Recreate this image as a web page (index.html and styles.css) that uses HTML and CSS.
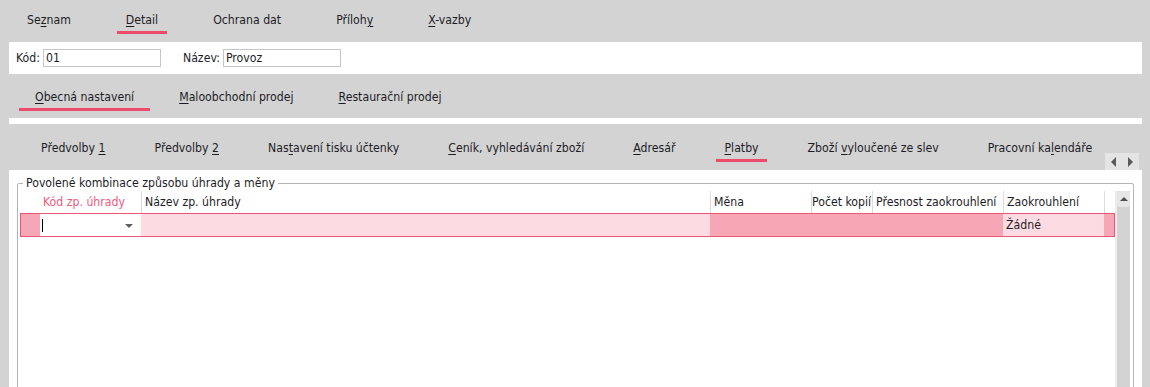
FILE: index.html
```html
<!DOCTYPE html>
<html lang="cs">
<head>
  <meta charset="UTF-8">
  <title>Provoz - Platby</title>
  <link rel="stylesheet" href="styles.css">
</head>
<body>
  <!-- Main tabs -->
  <div class="tabs tabs-main">
    <div class="tab">Se<u>z</u>nam</div>
    <div class="tab active"><u>D</u>etail</div>
    <div class="tab">Ochrana dat</div>
    <div class="tab">Příloh<u>y</u></div>
    <div class="tab"><u>X</u>-vazby</div>
  </div>

  <!-- Record header -->
  <div class="record">
    <label for="kod">Kód:</label>
    <input type="text" id="kod" value="01">
    <label for="nazev" class="second">Název:</label>
    <input type="text" id="nazev" value="Provoz">
  </div>

  <!-- Section tabs -->
  <div class="tabs tabs-sub">
    <div class="tab active"><u>O</u>becná nastavení</div>
    <div class="tab"><u>M</u>aloobchodní prodej</div>
    <div class="tab"><u>R</u>estaurační prodej</div>
  </div>
  <div class="divider"></div>

  <!-- Page tabs -->
  <div class="tabs tabs-page">
    <div class="tab">Předvolby <u>1</u></div>
    <div class="tab">Předvolby <u>2</u></div>
    <div class="tab">Nas<u>t</u>avení tisku účtenky</div>
    <div class="tab"><u>C</u>eník, vyhledávání zboží</div>
    <div class="tab"><u>A</u>dresář</div>
    <div class="tab active"><u>P</u>latby</div>
    <div class="tab">Zboží <u>v</u>yloučené ze slev</div>
    <div class="tab">Pracovní ka<u>l</u>endáře</div>
    <div class="scroll-arrows">
      <span class="arrow arrow-left"></span>
      <span class="arrow arrow-right"></span>
    </div>
  </div>

  <!-- Content -->
  <div class="panel">
    <fieldset class="group">
      <legend>Povolené kombinace způsobu úhrady a měny</legend>
      <div class="grid-wrap">
        <div class="grid">
          <div class="grid-head">
            <div class="cell"></div>
            <div class="cell key">Kód zp. úhrady</div>
            <div class="cell sep">Název zp. úhrady</div>
            <div class="cell sep">Měna</div>
            <div class="cell sep right">Počet kopií</div>
            <div class="cell sep">Přesnost zaokrouhlení</div>
            <div class="cell sep">Zaokrouhlení</div>
            <div class="cell sep"></div>
          </div>
          <div class="grid-row">
            <div class="cell mark"></div>
            <div class="cell editor"><span class="caret"></span><span class="drop"></span></div>
            <div class="cell light"></div>
            <div class="cell dark"></div>
            <div class="cell dark"></div>
            <div class="cell dark"></div>
            <div class="cell light">Žádné</div>
            <div class="cell dark"></div>
          </div>
        </div>
        <div class="vscroll">
          <div class="vscroll-up"></div>
        </div>
      </div>
    </fieldset>
  </div>
</body>
</html>
```

FILE: styles.css
```css
/* Base */
* {
  box-sizing: border-box;
}

body {
  margin: 0;
  height: 387px;
  overflow: hidden;
  background: #d3d3d3;
  color: #1c1c26;
  font-family: "DejaVu Sans Condensed", Tahoma, sans-serif;
  font-size: 12.2px;
}

u {
  text-decoration-thickness: 1px;
  text-underline-offset: 2px;
}

/* Tabs */
.tabs {
  display: flex;
  align-items: flex-start;
  white-space: nowrap;
}

.tab {
  line-height: 16px;
  border-bottom: 3px solid transparent;
}

.tab.active {
  border-bottom-color: #ee4a6c;
}

.tabs-main {
  height: 42px;
  padding-left: 18px;
  gap: 37px;
}

.tabs-main .tab {
  padding: 12px 9px 3px;
}

.tabs-sub {
  height: 44px;
  padding-left: 19px;
  gap: 13px;
}

.tabs-sub .tab {
  padding: 15px 16px 3px;
}

.tabs-page {
  position: relative;
  height: 46px;
  margin: 0 8px 0 9px;
  padding-left: 24px;
  gap: 33px;
  overflow: hidden;
}

.tabs-page .tab {
  padding: 16px 8px 3px;
}

/* Record header */
.record {
  display: flex;
  align-items: center;
  height: 32px;
  margin: 0 8px 0 9px;
  padding-left: 7px;
  background: #fff;
}

.record label {
  margin-right: 3px;
}

.record label.second {
  margin-left: 22px;
}

.record input {
  width: 118px;
  height: 18px;
  padding: 0 2px;
  border: 1px solid #c6c6c6;
  font: inherit;
  color: #1c1c26;
}

.divider {
  height: 6px;
  margin: 0 8px 0 9px;
  background: #fff;
}

/* Tab scroll arrows */
.scroll-arrows {
  position: absolute;
  right: 3px;
  top: 29px;
  display: flex;
  width: 34px;
  height: 17px;
  background: #e4e4e4;
}

.arrow {
  flex: 1;
  display: flex;
  align-items: center;
  justify-content: center;
}

.arrow::before {
  content: '';
  border-top: 5px solid transparent;
  border-bottom: 5px solid transparent;
}

.arrow-left::before {
  border-right: 5px solid #5a5a5a;
}

.arrow-right::before {
  border-left: 5px solid #5a5a5a;
}

/* Content panel */
.panel {
  height: 217px;
  margin: 0 8px 0 9px;
  padding: 5px 8px 0;
  background: #fff;
}

.group {
  height: 260px;
  margin: 0;
  padding: 0 2px;
  border: 1px solid #b4b4b4;
  border-radius: 2px;
}

.group legend {
  margin-left: 3px;
  padding: 0 3px;
  line-height: 16px;
}

.grid-wrap {
  display: flex;
  height: 100%;
}

.grid {
  flex: 1;
  border-right: 2px solid #ececec;
}

.grid-head,
.grid-row {
  display: grid;
  grid-template-columns: 20px 101px 569px 101px 61px 131px 101px 9px;
}

.grid-head {
  height: 22px;
}

.grid-head .cell {
  padding: 0 3px;
  line-height: 22px;
  overflow: hidden;
  white-space: nowrap;
}

.grid-head .cell.sep {
  border-left: 1px solid #dcdcdc;
}

.grid-head .cell.right {
  padding: 0 1px 0 0;
  text-align: right;
}

.grid-head .cell.key {
  color: #f05a7c;
}

.grid-row {
  height: 24px;
  border: 1px solid #ef5676;
  grid-template-columns: 19px 101px 569px 101px 61px 131px 101px 10px;
}

.grid-row .cell {
  position: relative;
  padding: 0 3px;
  line-height: 22px;
}

.cell.mark,
.cell.dark {
  background: #f6a6b5;
}

.cell.light {
  background: #fcdce2;
}

.cell.editor {
  background: #fff;
}

.caret {
  position: absolute;
  left: 2px;
  top: 5px;
  width: 1px;
  height: 13px;
  background: #000;
}

.drop {
  position: absolute;
  right: 8px;
  top: 10px;
  border-left: 4px solid transparent;
  border-right: 4px solid transparent;
  border-top: 4px solid #5e5e5e;
}

/* Vertical scrollbar */
.vscroll {
  width: 13px;
  margin-right: 1px;
  background: #d3d3d3;
}

.vscroll-up {
  position: relative;
  height: 16px;
  background: #e6e6e6;
  border-radius: 2px;
}

.vscroll-up::before {
  content: '';
  position: absolute;
  left: 3px;
  top: 6px;
  border-left: 4px solid transparent;
  border-right: 4px solid transparent;
  border-bottom: 4px solid #4e4e4e;
}
```
